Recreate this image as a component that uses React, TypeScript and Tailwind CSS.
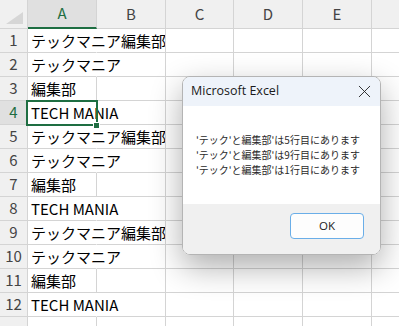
import { X } from "lucide-react";

const cols = ["A", "B", "C", "D", "E", ""];
const colWidths = ["w-[69px]", "w-[69px]", "w-[68px]", "w-[69px]", "w-[69px]", "w-[40px]"];

const values = [
  "テックマニア編集部",
  "テックマニア",
  "編集部",
  "TECH MANIA",
  "テックマニア編集部",
  "テックマニア",
  "編集部",
  "TECH MANIA",
  "テックマニア編集部",
  "テックマニア",
  "編集部",
  "TECH MANIA",
];

const messages = [
  "'テック'と編集部'は5行目にあります",
  "'テック'と編集部'は9行目にあります",
  "'テック'と編集部'は1行目にあります",
];

const font = "font-['Noto_Sans_CJK_JP',sans-serif]";

const App = () => {
  return (
    <div className={`relative w-[399px] h-[326px] overflow-hidden bg-white ${font}`}>
      {/* column headers */}
      <div className="flex h-[29px] bg-[#f0f0f0]">
        <div className="w-[28px] shrink-0 border-r border-b border-[#d4d4d4] flex items-end justify-end pr-[4px] pb-[4px]">
          <div className="w-0 h-0 border-l-[17px] border-l-transparent border-b-[12px] border-b-[#d6d6d6]" />
        </div>
        {cols.map((c, i) => (
          <div
            key={i}
            className={`${colWidths[i]} shrink-0 border-r border-[#d4d4d4] flex items-center justify-center text-[15px] ${
              i === 0
                ? "bg-[#e0e0e0] border-b-2 border-b-[#1e6e42] text-[#1e6e42]"
                : "border-b text-[#444]"
            }`}
          >
            {c}
          </div>
        ))}
      </div>

      {/* rows */}
      {[...values, ""].map((v, r) => {
        const overflow = v.length > 3;
        return (
          <div key={r} className="flex h-[24px]">
            <div
              className={`w-[28px] shrink-0 border-r border-b border-[#d4d4d4] flex items-center justify-center text-[15px] ${
                r === 3 ? "bg-[#e0e0e0] text-[#1e6e42]" : "bg-[#f0f0f0] text-[#444]"
              }`}
            >
              {r < values.length ? r + 1 : ""}
            </div>
            {cols.map((_, i) => (
              <div
                key={i}
                className={`${colWidths[i]} shrink-0 border-b border-[#d4d4d4] ${
                  i === 0 && overflow ? "border-r border-r-transparent" : "border-r"
                } flex items-center`}
              >
                {i === 0 && (
                  <span className="pl-[3px] whitespace-nowrap text-[15px] text-black leading-none">
                    {v}
                  </span>
                )}
              </div>
            ))}
          </div>
        );
      })}

      {/* selected cell A4 */}
      <div className="absolute left-[26px] top-[100px] w-[72px] h-[26px] border-2 border-[#1e6e42]" />
      <div className="absolute left-[93px] top-[122px] w-[7px] h-[7px] bg-[#1e6e42] border border-white" />

      {/* message box */}
      <div className="absolute left-[182px] top-[76px] w-[199px] h-[179px] rounded-[8px] border border-[#b4b4b4] overflow-hidden flex flex-col shadow-[0_12px_32px_rgba(0,0,0,0.32)]">
        <div className="h-[29px] bg-[#eef3fa] flex items-center justify-between pl-[8px] pr-[5px]">
          <span className="text-[12.5px] text-[#1a1a1a] font-['Open_Sans',sans-serif]">Microsoft Excel</span>
          <X size={21} strokeWidth={1} className="text-[#1a1a1a]" />
        </div>
        <div className="flex-1 bg-white pl-[13px] pt-[26px]">
          {messages.map((m) => (
            <div key={m} className="text-[10px] leading-[15px] text-[#2a2a2a]">
              {m}
            </div>
          ))}
        </div>
        <div className="h-[50px] bg-[#f0f0f0] flex items-start justify-end pt-[9px] pr-[16px]">
          <button className="w-[74px] h-[26px] rounded-[4px] border border-[#6aaee8] bg-[#fdfdfd] text-[11.5px] text-[#1a1a1a] font-['Open_Sans',sans-serif]">
            OK
          </button>
        </div>
      </div>
    </div>
  );
};

export default App;
